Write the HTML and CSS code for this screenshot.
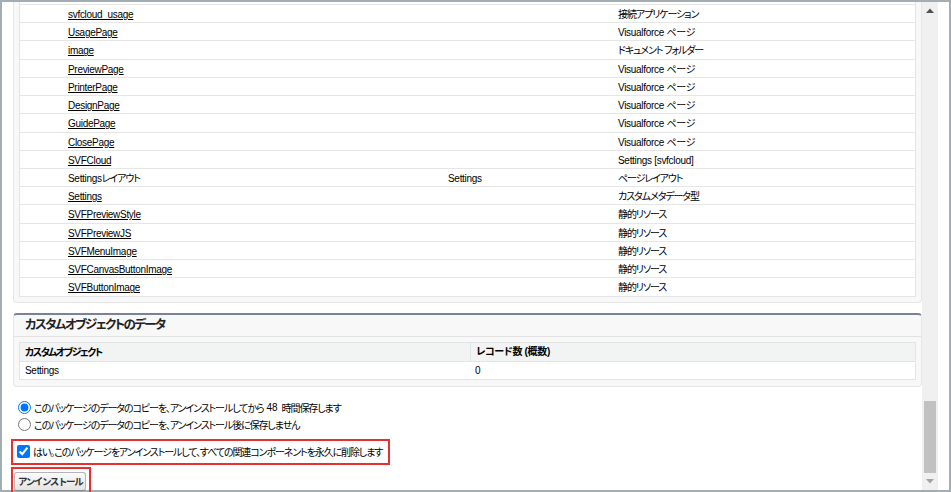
FILE: index.html
```html
<!DOCTYPE html>
<html>

<head>
  <title>パッケージのアンインストール</title>
  <meta name="viewport" content="width=device-width, initial-scale=1">
  <link rel="stylesheet" href="styles.css">
</head>

<body>
  <div class="frame">
    <div class="main">
      <div class="panel panel-cut">
        <div class="list">
          <div class="row"><span></span><a href="#">svfcloud_usage</a><span></span><span class="ja">接続アプリケーション</span></div>
          <div class="row"><span></span><a href="#">UsagePage</a><span></span><span>Visualforce ページ</span></div>
          <div class="row"><span></span><a href="#">image</a><span></span><span class="ja">ドキュメント フォルダー</span></div>
          <div class="row"><span></span><a href="#">PreviewPage</a><span></span><span>Visualforce ページ</span></div>
          <div class="row"><span></span><a href="#">PrinterPage</a><span></span><span>Visualforce ページ</span></div>
          <div class="row"><span></span><a href="#">DesignPage</a><span></span><span>Visualforce ページ</span></div>
          <div class="row"><span></span><a href="#">GuidePage</a><span></span><span>Visualforce ページ</span></div>
          <div class="row"><span></span><a href="#">ClosePage</a><span></span><span>Visualforce ページ</span></div>
          <div class="row"><span></span><a href="#">SVFCloud</a><span></span><span>Settings [svfcloud]</span></div>
          <div class="row"><span></span><span>Settings<span class="ja">レイアウト</span></span><span>Settings</span><span class="ja">ページレイアウト</span></div>
          <div class="row"><span></span><a href="#">Settings</a><span></span><span class="ja">カスタムメタデータ型</span></div>
          <div class="row"><span></span><a href="#">SVFPreviewStyle</a><span></span><span class="ja">静的リソース</span></div>
          <div class="row"><span></span><a href="#">SVFPreviewJS</a><span></span><span class="ja">静的リソース</span></div>
          <div class="row"><span></span><a href="#">SVFMenuImage</a><span></span><span class="ja">静的リソース</span></div>
          <div class="row"><span></span><a href="#">SVFCanvasButtonImage</a><span></span><span class="ja">静的リソース</span></div>
          <div class="row"><span></span><a href="#">SVFButtonImage</a><span></span><span class="ja">静的リソース</span></div>
        </div>
      </div>

      <div class="panel panel-data">
        <h3 class="panel-head">カスタムオブジェクトのデータ</h3>
        <div class="panel-body">
          <div class="data-table">
            <div class="data-row data-head"><span class="ja-bold">カスタムオブジェクト</span><span>レコード数 (概数)</span></div>
            <div class="data-row"><span>Settings</span><span>0</span></div>
          </div>
        </div>
      </div>

      <div class="options ja">
        <label class="option"><input type="radio" name="keep" checked>このパッケージのデータのコピーを、アンインストールしてから<span class="num">48</span>時間保存します</label>
        <label class="option"><input type="radio" name="keep">このパッケージのデータのコピーを、アンインストール後に保存しません</label>
      </div>

      <div class="mark confirm ja">
        <label class="option"><input type="checkbox" checked>はい。このパッケージをアンインストールして、すべての関連コンポーネントを永久に削除します</label>
      </div>

      <div class="mark action">
        <button class="btn">アンインストール</button>
      </div>
    </div>

    <div class="scrollbar">
      <div class="sb-btn">
        <svg width="8" height="5" viewBox="0 0 8 5"><path d="M0 5 L4 0.5 L8 5 Z" fill="#505050"/></svg>
      </div>
      <div class="sb-track"><div class="sb-thumb"></div></div>
      <div class="sb-btn">
        <svg width="8" height="5" viewBox="0 0 8 5"><path d="M0 0 L8 0 L4 4.5 Z" fill="#a3a3a3"/></svg>
      </div>
    </div>
  </div>
</body>

</html>
```

FILE: styles.css
```css
html,
body {
  margin: 0;
}

body {
  font-family: "Liberation Sans", "Noto Sans CJK JP", sans-serif;
  font-size: 10px;
  letter-spacing: -0.3px;
  font-feature-settings: "palt";
  color: #000;
}

/* Japanese runs are set tighter, like the narrow UI gothic of the original */
.ja {
  letter-spacing: -1.1px;
}

.ja-bold {
  letter-spacing: -1.5px;
}

.num {
  letter-spacing: 0;
  margin: 0 4px 0 3px;
}

.frame {
  width: 951px;
  height: 492px;
  box-sizing: border-box;
  border: 2px solid #a3aeb2;
  background: #fff;
  display: flex;
}

.main {
  width: 920px;
  padding-left: 11px;
  box-sizing: border-box;
}

.panel {
  border: 1px solid #e6e6e6;
  border-radius: 4px;
  background: #f8f8f8;
}

.panel-cut {
  border-top: none;
  border-radius: 0 0 4px 4px;
  padding: 0 5px 5px;
}

.list {
  background: #fff;
  border: 1px solid #e2e4e6;
  border-top: none;
  padding-top: 2px;
}

.row {
  display: grid;
  grid-template-columns: 43px 380px 170px 1fr;
  height: 18.22px;
  box-sizing: border-box;
  border-top: 1px solid #e6e6e6;
  padding-top: 2px;
  align-items: center;
  line-height: 16px;
}

.row > * {
  padding-left: 5px;
  white-space: nowrap;
}

.row a {
  color: #000;
}

.panel-data {
  margin-top: 10px;
  border-top: 2px solid #78839a;
}

.panel-head {
  margin: 0;
  height: 21px;
  line-height: 21px;
  padding: 0 11px;
  font-size: 12.5px;
  font-weight: bold;
  letter-spacing: -1.6px;
  color: #222;
  border-bottom: 1px solid #e2e2e2;
}

.panel-body {
  padding: 5px 5px 6px;
}

.data-table {
  border: 1px solid #e2e4e6;
  background: #fff;
}

.data-row {
  display: grid;
  grid-template-columns: 450px 1fr;
  height: 17px;
  align-items: center;
}

.data-row > * {
  padding-left: 5px;
  white-space: nowrap;
}

.data-head {
  background: #f2f3f3;
  font-weight: bold;
  height: 18px;
  border-bottom: 1px solid #e2e4e6;
}

.data-head > * + * {
  height: 100%;
  line-height: 18px;
  border-left: 1px solid #e2e4e6;
}

.options {
  margin-top: 12px;
  padding-left: 5px;
}

.option {
  display: flex;
  align-items: center;
  height: 17px;
  white-space: nowrap;
}

.option input {
  margin: 0 3px 0 0;
  width: 13px;
  height: 13px;
}

.mark {
  border: 2px solid #e8302e;
  width: fit-content;
  margin-left: -2px;
  box-sizing: border-box;
}

.confirm {
  margin-top: 6px;
  height: 26px;
  padding: 2px 6px 0 4px;
}

.action {
  margin-top: 2px;
  height: 27px;
  padding: 3px 3px 0 1px;
}

.btn {
  display: block;
  height: 19px;
  padding: 0 3px;
  font-family: inherit;
  font-size: 9.5px;
  font-weight: bold;
  letter-spacing: -1.4px;
  color: #333;
  background: linear-gradient(#fbfbfb, #e4e4e4);
  border: 1px solid #b5b5b5;
  border-bottom-color: #8a8a8a;
  border-radius: 3px;
}

.scrollbar {
  width: 16px;
  margin-right: 11px;
  background: #f0f0f0;
  display: flex;
  flex-direction: column;
}

.sb-btn {
  height: 17px;
  display: flex;
  align-items: center;
  justify-content: center;
}

.sb-track {
  flex: 1;
  display: flex;
  flex-direction: column;
  justify-content: flex-end;
  padding: 0 2px;
}

.sb-thumb {
  height: 72px;
  background: #c1c1c1;
}
```
